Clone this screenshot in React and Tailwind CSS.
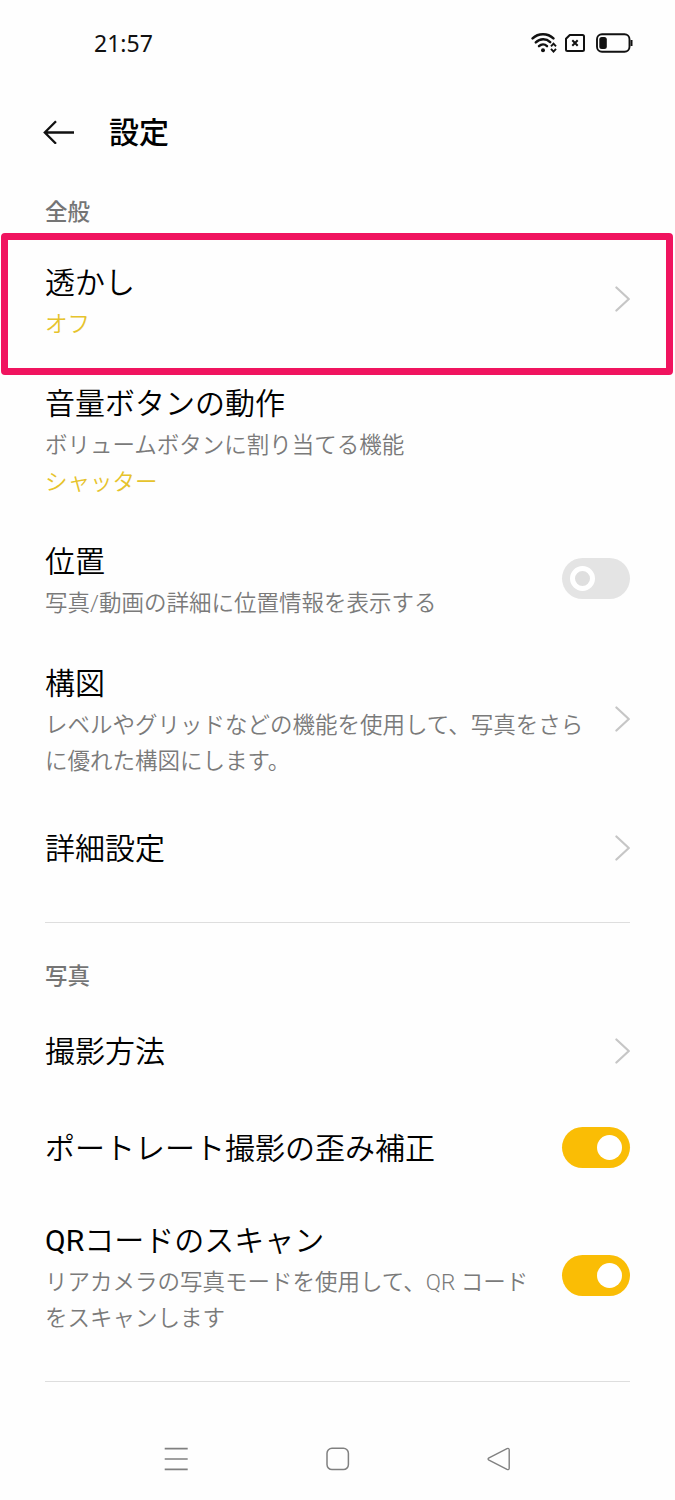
import React from 'react';

function Chevron() {
  return (
    <svg className="w-4 h-[26px] mb-[3px] shrink-0 text-[#c6c6c6]" viewBox="0 0 16 26" fill="none" aria-hidden="true">
      <path
        d="M2.4 1.5 14.8 13 2.4 24.5"
        stroke="currentColor"
        strokeWidth="2.2"
        strokeLinecap="round"
        strokeLinejoin="round"
      />
    </svg>
  );
}

function Toggle({ on }) {
  return (
    <div
      role="switch"
      aria-checked={on}
      className={`flex items-center w-[68px] h-[41px] mb-1 rounded-full px-2 shrink-0 ${
        on ? 'bg-[#fabd05] justify-end' : 'bg-[#e4e4e4]'
      }`}
    >
      <div
        className={
          on
            ? 'w-[25px] h-[25px] rounded-full bg-white'
            : 'w-[25px] h-[25px] rounded-full border-[5px] border-white bg-[#dfdfdf]'
        }
      />
    </div>
  );
}

function Row({ title, lines = [], value, className = '', children }) {
  return (
    <div className={`flex items-center justify-between pl-[45px] pr-[45px] ${className}`}>
      <div className="whitespace-nowrap">
        <h2 className="pb-[2px] text-[30px] leading-[43px] font-[350] text-black">{title}</h2>
        {lines.map((line) => (
          <p key={line} className="text-[22.5px] leading-[36.5px] font-[350] text-[#7a7a7a]">
            {line}
          </p>
        ))}
        {value && <p className="text-[22.5px] leading-[36.5px] font-[350] text-[#e6c32c]">{value}</p>}
      </div>
      {children}
    </div>
  );
}

function StatusBar() {
  return (
    <div className="flex items-center justify-between h-[86px] pl-[94px] pr-[42px] text-[#111]">
      <span className="font-['Noto_Sans'] font-[380] text-[23px] leading-8">21:57</span>
      <div className="flex items-center">
        <svg className="w-[27px] h-5" viewBox="0 0 27 20" fill="none" aria-hidden="true">
          <g stroke="currentColor" strokeWidth="2.5" strokeLinecap="round">
            <path d="M1.6 5.4C7.4-.1 16.6-.1 22.4 5.4" />
            <path d="M4.8 9.4c4.2-4 10.4-4 14.4-.3" />
            <path d="M8 13.2c2.4-2.3 5.6-2.3 8-.1" />
          </g>
          <circle cx="12" cy="17.2" r="2" fill="currentColor" />
          <path d="M20 13.3 22.5 10.6 25 13.3M20 15.9 22.5 18.6 25 15.9" stroke="currentColor" strokeWidth="1.9" />
        </svg>
        <svg className="w-5 h-[18px] ml-[7px]" viewBox="0 0 20 18" fill="none" stroke="currentColor" aria-hidden="true">
          <path d="M4.8 1H17.5Q19 1 19 2.5v13Q19 17 17.5 17h-15Q1 17 1 15.5V4.8Z" strokeWidth="2" strokeLinejoin="round" />
          <path d="m7.3 6.3 5.4 5.4m0-5.4-5.4 5.4" strokeWidth="2" />
        </svg>
        <svg className="w-[37px] h-5 ml-[11px]" viewBox="0 0 37 20" aria-hidden="true">
          <rect x="1" y="1.3" width="32.5" height="17.4" rx="5" fill="none" stroke="currentColor" strokeWidth="1.9" />
          <rect x="3.3" y="4" width="7.5" height="12" rx="2.5" fill="currentColor" />
          <path d="M34.5 7h2v6h-2z" fill="currentColor" />
        </svg>
      </div>
    </div>
  );
}

function Header() {
  return (
    <header className="flex items-center h-[92px] pl-[43px]">
      <svg className="w-8 h-6" viewBox="0 0 32 24" fill="none" stroke="#111" strokeWidth="2.3" aria-hidden="true">
        <path d="M31 12.5H1.8M13 1.3 1.8 12.5 13 23.7" />
      </svg>
      <h1 className="ml-[34px] text-[30px] leading-[45px] font-medium text-black">設定</h1>
    </header>
  );
}

function SectionLabel({ children, className = '' }) {
  return (
    <p className={`px-[45px] text-[22.5px] leading-[36px] font-medium text-[#757575] ${className}`}>
      {children}
    </p>
  );
}

function NavBar() {
  return (
    <nav className="flex items-center justify-between pl-[164px] pr-[164px] mt-[65px] text-[#808080]">
      <svg className="w-6 h-6" viewBox="0 0 24 24" stroke="currentColor" strokeWidth="1.7" aria-hidden="true">
        <path d="M.7 1.7h23M.7 12h23M.7 22.3h23" />
      </svg>
      <svg className="w-6 h-6" viewBox="0 0 24 24" fill="none" aria-hidden="true">
        <rect x="1" y="1.2" width="21.4" height="21.4" rx="5" stroke="currentColor" strokeWidth="1.5" />
      </svg>
      <svg className="w-6 h-6" viewBox="0 0 24 24" fill="none" aria-hidden="true">
        <path
          d="M2 10.8 20 1.6Q22 .8 22.2 2.8V21.2Q22 23.2 20 22.4L2 13.2Q.2 12 2 10.8Z"
          stroke="currentColor"
          strokeWidth="1.4"
        />
      </svg>
    </nav>
  );
}

function App() {
  return (
    <div
      lang="ja"
      className="w-[675px] h-[1500px] overflow-hidden bg-[#fefefe] font-['Roboto','Noto_Sans_CJK_JP',sans-serif]"
    >
      <StatusBar />
      <Header />

      <SectionLabel className="mt-4">全般</SectionLabel>
      <div className="relative mt-[3px]">
        <Row title="透かし" value="オフ" className="h-[142px] pb-[5px]">
          <div className="pb-[3px]">
            <Chevron />
          </div>
        </Row>
        {/* highlight frame */}
        <div className="absolute inset-y-0 left-[1px] right-[2px] border-[7px] border-[#f0145f] rounded" />
      </div>
      <Row title="音量ボタンの動作" lines={['ボリュームボタンに割り当てる機能']} value="シャッター" className="mt-[7px]" />
      <Row title="位置" lines={['写真/動画の詳細に位置情報を表示する']} className="mt-10">
        <Toggle on={false} />
      </Row>
      <Row
        title="構図"
        lines={['レベルやグリッドなどの機能を使用して、写真をさら', 'に優れた構図にします。']}
        className="mt-10"
      >
        <Chevron />
      </Row>
      <Row title="詳細設定" className="mt-[47px]">
        <Chevron />
      </Row>

      <hr className="mx-[45px] mt-[50px] border-[#dedede]" />

      <SectionLabel className="mt-[35px]">写真</SectionLabel>
      <Row title="撮影方法" className="mt-[36px]">
        <Chevron />
      </Row>
      <Row title="ポートレート撮影の歪み補正" className="mt-[52px]">
        <Toggle on={true} />
      </Row>
      <Row
        title={
          <>
            <span className="font-normal">QR</span>コードのスキャン
          </>
        }
        lines={['リアカメラの写真モードを使用して、QR コード', 'をスキャンします']}
        className="mt-[47px]"
      >
        <Toggle on={true} />
      </Row>

      <hr className="mx-[45px] mt-[44px] border-[#dedede]" />
      <NavBar />
    </div>
  );
}

export default App;
